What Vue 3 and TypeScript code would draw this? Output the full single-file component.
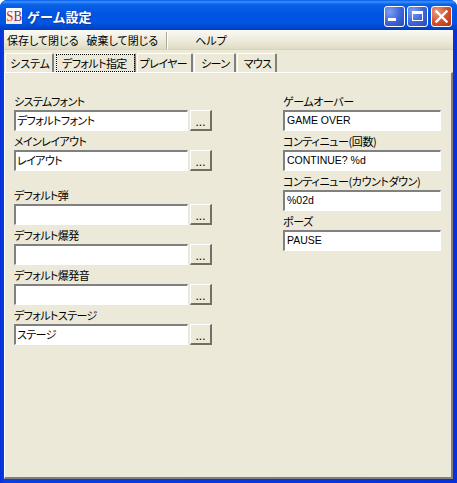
<template>
  <div class="window">
    <div class="titlebar">
      <span class="app-icon"><span class="icon-text"><span class="icon-s">S</span><span class="icon-b">B</span></span></span>
      <span class="title">ゲーム設定</span>
      <div class="controls">
        <button class="ctl blue" aria-label="最小化"><i class="min-glyph"></i></button>
        <button class="ctl blue" aria-label="最大化"><i class="max-glyph"></i></button>
        <button class="ctl red" aria-label="閉じる">
          <svg width="21" height="21" viewBox="0 0 21 21">
            <path d="M5.5 5.5 L15.5 15.5 M15.5 5.5 L5.5 15.5" stroke="#fff" stroke-width="2.4" stroke-linecap="square" fill="none" />
          </svg>
        </button>
      </div>
    </div>
    <div class="body">
      <div class="menubar">
        <span class="menu-item">保存して閉じる</span>
        <span class="menu-item">破棄して閉じる</span>
        <span class="menu-sep"></span>
        <span class="menu-item help">ヘルプ</span>
      </div>
      <div class="tabs">
        <span
          v-for="tab in tabs"
          :key="tab"
          class="tab"
          :class="{ active: tab === activeTab }"
        ><span class="tab-label">{{ tab }}</span></span>
      </div>
      <div class="panel">
        <div class="col left">
          <div
            v-for="f in leftFields"
            :key="f.label"
            class="field"
            :class="{ spaced: f.spaced }"
          >
            <label>{{ f.label }}</label>
            <div class="field-row">
              <div class="input wide">{{ f.value }}</div>
              <button class="dots">...</button>
            </div>
          </div>
        </div>
        <div class="col right">
          <div v-for="f in rightFields" :key="f.label" class="field">
            <label>{{ f.label }}</label>
            <div class="input narrow">{{ f.value }}</div>
          </div>
        </div>
      </div>
    </div>
  </div>
</template>

<script setup lang="ts">
interface Field {
  label: string
  value: string
  spaced?: boolean
}

const tabs = ['システム', 'デフォルト指定', 'プレイヤー', 'シーン', 'マウス']
const activeTab = 'デフォルト指定'

const leftFields: Field[] = [
  { label: 'システムフォント', value: 'デフォルトフォント' },
  { label: 'メインレイアウト', value: 'レイアウト' },
  { label: 'デフォルト弾', value: '', spaced: true },
  { label: 'デフォルト爆発', value: '' },
  { label: 'デフォルト爆発音', value: '' },
  { label: 'デフォルトステージ', value: 'ステージ' }
]

const rightFields: Field[] = [
  { label: 'ゲームオーバー', value: 'GAME OVER' },
  { label: 'コンティニュー(回数)', value: 'CONTINUE? %d' },
  { label: 'コンティニュー(カウントダウン)', value: '%02d' },
  { label: 'ポーズ', value: 'PAUSE' }
]
</script>

<style>
html,
body {
  margin: 0;
  background: #fff;
}
</style>

<style scoped>
.window {
  width: 457px;
  height: 483px;
  box-sizing: border-box;
  display: flex;
  flex-direction: column;
  background: linear-gradient(90deg, #0831d9 0%, #0a3fe0 1%, #0831d9 100%);
  border-radius: 7px 7px 0 0;
  overflow: hidden;
  font-family: "Noto Sans CJK JP", "Liberation Sans", sans-serif;
  font-feature-settings: "palt";
  font-size: 11px;
  color: #000;
}

.titlebar {
  height: 30px;
  flex: none;
  box-sizing: border-box;
  display: flex;
  align-items: center;
  padding: 2px 5px 0 6px;
  background: linear-gradient(180deg, #0058ee 0%, #3a93ff 6%, #0a62e6 14%, #0054e3 45%, #0055e5 75%, #0048cf 90%, #003dc0 100%);
}

.app-icon {
  width: 16px;
  height: 16px;
  flex: none;
  display: flex;
  justify-content: center;
  background: linear-gradient(180deg, #fff 0%, #f4ead8 100%);
  font-family: "Liberation Serif", serif;
  font-size: 15px;
  line-height: 16px;
}

.icon-text {
  display: block;
  white-space: nowrap;
  transform: scaleX(0.86);
}

.icon-s {
  color: #c8321e;
}

.icon-b {
  color: #7a2a78;
}

.title {
  margin-left: 5px;
  color: #fff;
  font-size: 13px;
  font-weight: 700;
  font-feature-settings: normal;
  text-shadow: 1px 1px 0 #0f3a9e;
}

.controls {
  margin-left: auto;
  display: flex;
  gap: 2px;
}

.ctl {
  width: 21px;
  height: 21px;
  padding: 0;
  border: 1px solid #fff;
  border-radius: 3px;
  box-sizing: border-box;
  display: flex;
  align-items: center;
  justify-content: center;
}

.ctl.red {
  margin-left: 1px;
}

.ctl svg {
  margin: -1px;
  flex: none;
}

.blue {
  background: radial-gradient(circle at 25% 25%, #7f9ff0 0%, #3f68dc 50%, #2448bd 100%);
}

.red {
  background: radial-gradient(circle at 25% 25%, #ea9a80 0%, #d8522e 50%, #b92f0c 100%);
}

.min-glyph {
  width: 8px;
  height: 3px;
  background: #fff;
  margin: 7px 6px 0 0;
}

.max-glyph {
  width: 11px;
  height: 10px;
  box-sizing: border-box;
  border: 1px solid #fff;
  border-top-width: 3px;
}

.body {
  flex: 1;
  min-height: 0;
  margin: 0 4px 4px 4px;
  background: #ece9d8;
  display: flex;
  flex-direction: column;
}

.menubar {
  height: 20px;
  flex: none;
  box-sizing: border-box;
  display: flex;
  align-items: center;
  padding: 1px 0 0 3px;
  background: linear-gradient(180deg, #fbfaf5 0%, #ece9d8 60%, #dedbc4 100%);
  border-bottom: 1px solid #d6d3bf;
}

.menu-item {
  margin-right: 8px;
  white-space: nowrap;
}

.menu-sep {
  width: 1px;
  height: 17px;
  margin: 0 28px 0 0;
  background: #aca899;
  box-shadow: 1px 0 0 #fff;
}

.tabs {
  height: 22px;
  flex: none;
  box-sizing: border-box;
  display: flex;
  align-items: flex-end;
  padding: 3px 0 0 1px;
}

.tab {
  height: 19px;
  box-sizing: border-box;
  padding: 0 4px 0 6px;
  display: flex;
  align-items: center;
  white-space: nowrap;
  letter-spacing: -0.6px;
  border-top: 1px solid #fff;
  border-left: 1px solid #fff;
  border-right: 2px solid #808080;
  border-radius: 2px 2px 0 0;
  margin-right: 1px;
}

.tab:first-child {
  padding: 0 2px 0 4px;
  letter-spacing: 0;
}

.tab:nth-child(3) {
  padding-left: 2px;
}

.tab.active {
  padding: 0;
  margin-left: 1px;
  background: #ece9d8;
}

.tab.active .tab-label {
  outline: 1px dotted #000;
  outline-offset: 0;
  padding: 0 7px 0 5px;
}

.panel {
  flex: 1;
  min-height: 0;
  display: flex;
  box-sizing: border-box;
  padding: 19px 0 0 9px;
  border-left: 1px solid #fff;
  border-top: 1px solid #fff;
  border-right: 2px solid #808080;
  border-bottom: 2px solid #808080;
}

.col {
  display: flex;
  flex-direction: column;
}

.left {
  width: 269px;
}

.left label {
  letter-spacing: -0.6px;
}

.right label {
  letter-spacing: -0.4px;
}

.field label {
  display: block;
  height: 18px;
  line-height: 18px;
  white-space: nowrap;
}

.field {
  margin-bottom: 1px;
}

.field.spaced {
  margin-top: 14px;
}

.field-row {
  display: flex;
  gap: 2px;
}

.input {
  height: 21px;
  box-sizing: border-box;
  background: #fff;
  border-top: 2px solid #808080;
  border-left: 2px solid #808080;
  border-right: 1px solid #fff;
  border-bottom: 1px solid #fff;
  padding-left: 1px;
  line-height: 17px;
  white-space: nowrap;
  overflow: hidden;
}

.wide {
  width: 174px;
  letter-spacing: -0.6px;
}

.narrow {
  width: 158px;
  padding-left: 2px;
  font-size: 10.5px;
  font-family: "Liberation Sans", sans-serif;
}

.dots {
  width: 22px;
  height: 21px;
  padding: 4px 0 0;
  box-sizing: border-box;
  background: #ece9d8;
  border-top: 1px solid #fff;
  border-left: 1px solid #fff;
  border-right: 2px solid #716f64;
  border-bottom: 2px solid #716f64;
  font-size: 12px;
  font-family: "Liberation Sans", sans-serif;
  line-height: 14px;
  color: #000;
}
</style>
